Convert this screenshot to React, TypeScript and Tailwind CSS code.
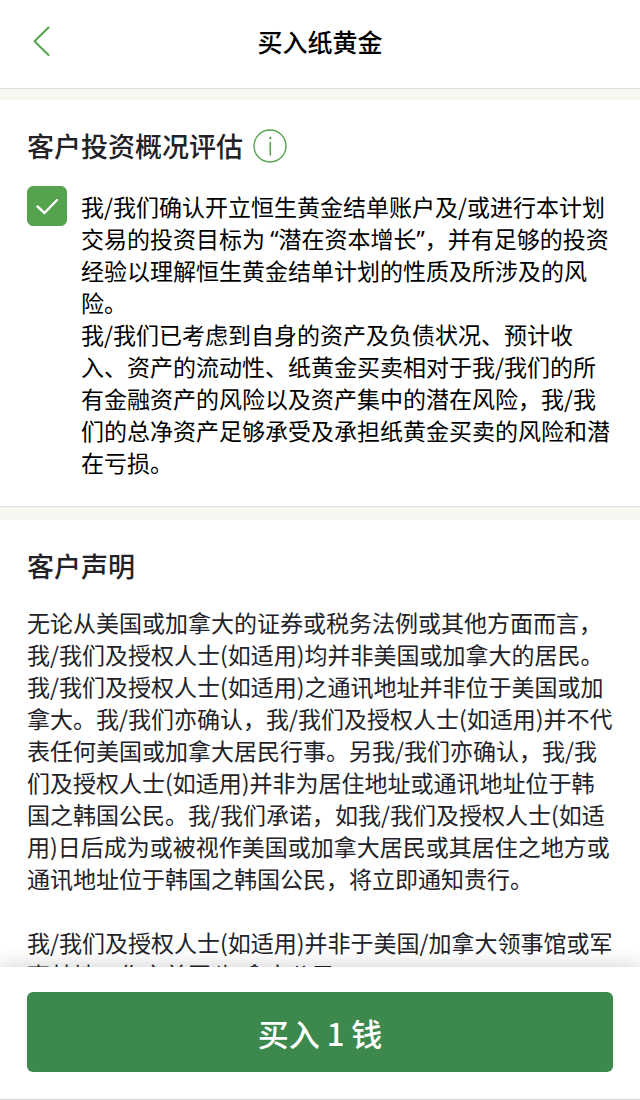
import { useState } from "react";
import type { ReactNode } from "react";

// Narrow latin quotes, the CJK face draws them full width
const Quote = ({ children }: { children: ReactNode }) => (
  <span className="font-['Noto_Sans',sans-serif] leading-none">{children}</span>
);

const ConfirmText = () => (
  <>
    <p>
      我/我们确认开立恒生黄金结单账户及/或进行本计划交易的投资目标为 <Quote>“</Quote>潜在资本增长<Quote>”</Quote>，并有足够的投资经验以理解恒生黄金结单计划的性质及所涉及的风险。
    </p>
    <p>
      我/我们已考虑到自身的资产及负债状况、预计收入、资产的流动性、纸黄金买卖相对于我/我们的所有金融资产的风险以及资产集中的潜在风险，我/我们的总净资产足够承受及承担纸黄金买卖的风险和潜在亏损。
    </p>
  </>
);

const App = () => {
  const [confirmed, setConfirmed] = useState(true);

  return (
    <div
      lang="zh-CN"
      className="flex h-dvh flex-col bg-white font-['Noto_Sans_CJK_SC',sans-serif] text-[#222228]"
    >
      <header className="grid h-[89px] shrink-0 grid-cols-[80px_1fr_80px] items-center border-b border-[#dededc] pb-[6px]">
        <button type="button" aria-label="返回" className="flex h-16 items-center pl-8">
          <svg className="h-8 w-5" viewBox="0 0 20 32" fill="none" stroke="#55a34f" strokeWidth="2" strokeLinecap="round" strokeLinejoin="round">
            <path d="M16.5 2.5 2.5 16.2 16.5 30" />
          </svg>
        </button>
        <h1 className="text-center text-[25px] leading-8 font-medium text-black">买入纸黄金</h1>
      </header>

      <main className="min-h-0 flex-1 overflow-y-auto bg-[#f7f6f1] [scrollbar-width:none]">
        <section className="mt-[11px] border-b border-[#dededc] bg-white px-[27px] pt-[26px] pb-7">
          <div className="flex items-center gap-[10px]">
            <h2 className="text-[27px] leading-10 font-medium">客户投资概况评估</h2>
            <button type="button" aria-label="说明">
              <svg className="size-[34px]" viewBox="0 0 34 34" fill="none" stroke="#55a34f">
                <circle cx="17" cy="17" r="16" strokeWidth="1.4" />
                <path d="M17.3 13.5V26" strokeWidth="1.6" strokeLinecap="round" />
                <circle cx="17.3" cy="9" r="1.2" fill="#55a34f" stroke="none" />
              </svg>
            </button>
          </div>

          <div className="mt-5 flex items-start gap-[14px]">
            <span className="grid shrink-0">
              <input
                id="confirm"
                type="checkbox"
                checked={confirmed}
                onChange={(e) => setConfirmed(e.target.checked)}
                className="peer col-start-1 row-start-1 size-10 appearance-none rounded-md border border-[#55a34f] checked:bg-[#55a34f]"
              />
              <svg
                className="pointer-events-none invisible col-start-1 row-start-1 size-10 peer-checked:visible"
                viewBox="0 0 40 40"
                fill="none"
                stroke="white"
                strokeWidth="2.4"
                strokeLinecap="round"
                strokeLinejoin="round"
              >
                <path d="M10.5 20.5 17.5 27 30 14" />
              </svg>
            </span>
            <label htmlFor="confirm" className="min-w-0 flex-1 pt-1 text-[23px] leading-8 text-black">
              <ConfirmText />
            </label>
          </div>
        </section>

        <section className="mt-[13px] bg-white px-[27px] pt-[26px] pb-8">
          <h2 className="text-[27px] leading-10 font-medium">客户声明</h2>
          <div className="mt-5 space-y-8 text-[23px] leading-8">
            <p>
              无论从美国或加拿大的证券或税务法例或其他方面而言，我/我们及授权人士(如适用)均并非美国或加拿大的居民。我/我们及授权人士(如适用)之通讯地址并非位于美国或加拿大。我/我们亦确认，我/我们及授权人士(如适用)并不代表任何美国或加拿大居民行事。另我/我们亦确认，我/我们及授权人士(如适用)并非为居住地址或通讯地址位于韩国之韩国公民。我/我们承诺，如我/我们及授权人士(如适用)日后成为或被视作美国或加拿大居民或其居住之地方或通讯地址位于韩国之韩国公民，将立即通知贵行。
            </p>
            <p>我/我们及授权人士(如适用)并非于美国/加拿大领事馆或军事基地工作之美国/加拿大公民。</p>
          </div>
        </section>
      </main>

      <footer className="relative shrink-0 border-b border-[#d8d8d8] bg-white px-[27px] pt-[25px] pb-[27px] shadow-[0_0_20px_rgba(0,0,0,0.2)]">
        <button type="button" className="h-20 w-full rounded-md bg-[#3d894d] pt-[2px] text-[31px] font-medium text-white">
          买入 1 钱
        </button>
      </footer>
    </div>
  );
};

export default App;
